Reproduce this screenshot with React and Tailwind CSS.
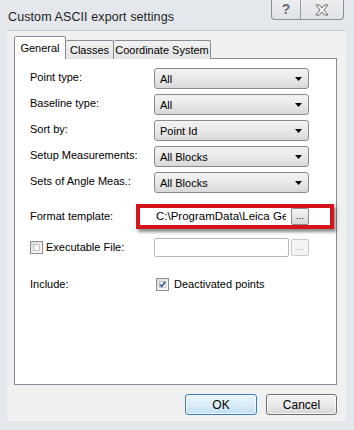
import React from "react";

const font = "font-['Liberation_Sans',Arial,sans-serif]";

const Arrow = () => (
  <svg width="7" height="4" viewBox="0 0 7 4" className="shrink-0">
    <path d="M0 0H7L3.5 4Z" fill="#000" />
  </svg>
);

const Combo = ({ value }) => (
  <div className="flex items-center justify-between w-[155px] h-[21px] pl-[5px] pr-[6px] border border-[#8b8b8b] rounded-[3px] bg-gradient-to-b from-[#f3f3f3] via-[#e9e9e9] to-[#d9d9d9] text-[11px] text-black">
    <span className="pt-[2px]">{value}</span>
    <Arrow />
  </div>
);

const Checkbox = ({ checked }) => (
  <div className="w-[13px] h-[13px] border border-[#8f8f8f] bg-gradient-to-br from-[#dcdcdc] to-[#fbfbfb] p-[2px] shrink-0">
    <div className="w-full h-full border border-[#c6c6c6] bg-gradient-to-br from-[#e6e6e6] to-white flex items-center justify-center">
      {checked && (
        <svg width="9" height="9" viewBox="0 0 9 9" className="-m-[1px]">
          <path d="M1 4.5L3.5 7L8 1" stroke="#2a4d8f" strokeWidth="1.8" fill="none" />
        </svg>
      )}
    </div>
  </div>
);

const DotsButton = ({ disabled }) => (
  <div
    className={`w-[18px] h-[17px] shrink-0 rounded-[2px] border flex items-end justify-center pb-[3px] text-[9px] leading-none ${
      disabled
        ? "border-[#c9c9c9] bg-[#f4f4f4] text-[#a0a0a0]"
        : "border-[#8b8b8b] bg-gradient-to-b from-[#f3f3f3] to-[#d9d9d9] text-black"
    }`}
  >
    ...
  </div>
);

const rows = [
  ["Point type:", "All"],
  ["Baseline type:", "All"],
  ["Sort by:", "Point Id"],
  ["Setup Measurements:", "All Blocks"],
  ["Sets of Angle Meas.:", "All Blocks"],
];

export default function App() {
  return (
    <div className={`w-[354px] h-[430px] bg-[#e4e7eb] ${font} text-black flex flex-col overflow-hidden`}>
      {/* title bar */}
      <div className="h-[30px] flex items-start justify-between pl-[8px] pr-[10px] shrink-0">
        <span className="text-[12.5px] text-[#1e1e1e] pt-[8px] tracking-[0.1px]">Custom ASCII export settings</span>
        <div className="flex h-[20px] border border-t-0 border-[#8d8f92] rounded-b-[4px] bg-gradient-to-b from-[#eceef0] to-[#dfe2e6] overflow-hidden">
          <div className="w-[29px] flex items-center justify-center border-r border-[#9a9ca0] text-[14px] text-[#6a6a6a] font-bold">
            ?
          </div>
          <div className="w-[42px] flex items-center justify-center">
            <svg width="14" height="12" viewBox="0 0 14 12">
              <path
                d="M1 1H4.5L7 4L9.5 1H13L9 6L13 11H9.5L7 8L4.5 11H1L5 6Z"
                fill="#f4f4f4"
                stroke="#6d6d6d"
                strokeWidth="1"
              />
            </svg>
          </div>
        </div>
      </div>

      {/* client area */}
      <div className="ml-[7px] w-[339px] h-[391px] bg-[#f0f0f0] border-t border-[#c9ccd1] flex flex-col pt-[5px] pl-[7px] pr-[9px]">
        {/* tabs */}
        <div className="flex items-end h-[23px] text-[11px] relative z-10">
          <div className="w-[52px] h-[23px] bg-white border border-b-0 border-[#898c95] rounded-t-[2px] flex items-center justify-center pt-[1px]">
            General
          </div>
          <div className="w-[48px] h-[19px] border border-l-0 border-b-0 border-[#898c95] rounded-t-[2px] bg-gradient-to-b from-[#f2f2f2] to-[#e3e3e3] flex items-center justify-center">
            Classes
          </div>
          <div className="w-[97px] h-[19px] border border-l-0 border-b-0 border-[#898c95] rounded-t-[2px] bg-gradient-to-b from-[#f2f2f2] to-[#e3e3e3] flex items-center justify-center">
            Coordinate System
          </div>
        </div>

        {/* panel */}
        <div className="-mt-[1px] w-[323px] h-[327px] bg-white border border-[#898c95] pt-[9px] pl-[15px] text-[11px] flex flex-col">
          <div className="flex flex-col gap-[5px]">
            {rows.map(([label, value]) => (
              <div key={label} className="flex items-center h-[21px]">
                <span className="w-[124px] shrink-0 -mt-[3px]">{label}</span>
                <Combo value={value} />
              </div>
            ))}
          </div>

          {/* format template */}
          <div className="flex items-center mt-[11px] h-[25px]">
            <span className="w-[106px] shrink-0">Format template:</span>
            <div className="w-[198px] h-[25px] border-[4px] border-[#d4131b] shadow-[2px_3px_3px_rgba(0,0,0,0.45)] bg-white flex items-center pl-[16px]">
              <span className="text-[11.5px] whitespace-nowrap overflow-hidden w-[130px] shrink-0">C:\ProgramData\Leica Geo</span>
              <div className="ml-[5px]">
                <DotsButton />
              </div>
            </div>
          </div>

          {/* executable */}
          <div className="flex items-center mt-[9px] h-[19px]">
            <div className="w-[124px] shrink-0 flex items-center gap-[3px]">
              <Checkbox />
              <span>Executable File:</span>
            </div>
            <div className="w-[135px] h-[19px] border border-[#b5b8bd] rounded-[2px] bg-white" />
            <div className="ml-[2px]">
              <DotsButton disabled />
            </div>
          </div>

          {/* include */}
          <div className="flex items-center mt-[19px] h-[16px]">
            <span className="w-[126px] shrink-0">Include:</span>
            <Checkbox checked />
            <span className="ml-[5px]">Deactivated points</span>
          </div>
        </div>

        {/* buttons */}
        <div className="flex justify-end gap-[9px] mt-[9px] text-[12px]">
          <button className="w-[72px] h-[21px] rounded-[3px] border border-[#3c7fb1] bg-gradient-to-b from-[#eaf5fc] via-[#dbedf8] to-[#c2e0f4] shadow-[inset_0_0_0_1px_rgba(255,255,255,0.7)]">
            OK
          </button>
          <button className="w-[71px] h-[21px] rounded-[3px] border border-[#707070] bg-gradient-to-b from-[#f2f2f2] via-[#ebebeb] to-[#d6d6d6] shadow-[inset_0_0_0_1px_rgba(255,255,255,0.7)]">
            Cancel
          </button>
        </div>
      </div>
    </div>
  );
}
